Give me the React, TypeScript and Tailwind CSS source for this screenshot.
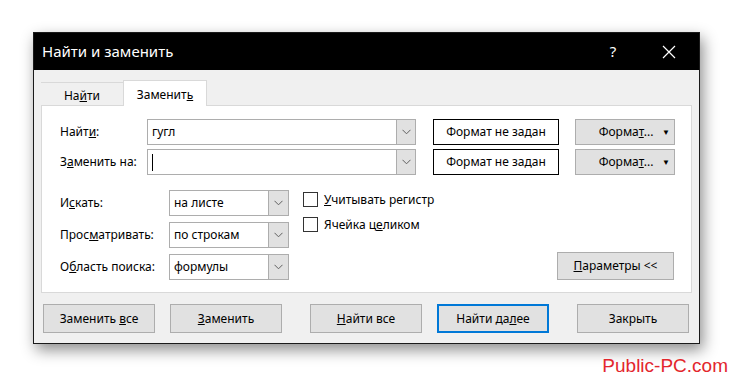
import React from "react";

const font = { fontFamily: '"Noto Sans", "Segoe UI", sans-serif' };

function Chevron() {
  return (
    <svg width="9" height="6" viewBox="0 0 9 6">
      <path d="M0.5 0.8 L4.5 4.8 L8.5 0.8" fill="none" stroke="#606060" strokeWidth="1" />
    </svg>
  );
}

function Combo({ width, value, caret }: { width: number; value?: string; caret?: boolean }) {
  return (
    <div className="flex h-[26px] border border-[#adadad] bg-white" style={{ width }}>
      <div className="flex flex-1 items-center pl-[4px] text-[12px] text-black">
        {caret ? <span className="inline-block h-[17px] w-px bg-black" /> : value}
      </div>
      <div className="flex w-[19px] items-center justify-center border-l border-[#adadad] bg-[#e1e1e1]">
        <Chevron />
      </div>
    </div>
  );
}

function Select({ value }: { value: string }) {
  return (
    <div className="flex h-[26px] w-[120px] border border-[#adadad] bg-white">
      <div className="flex flex-1 items-center pl-[4px] text-[12px] text-black">{value}</div>
      <div className="flex w-[20px] items-center justify-center border-l border-[#adadad] bg-[#e1e1e1]">
        <Chevron />
      </div>
    </div>
  );
}

function FormatRow({ label, combo }: { label: React.ReactNode; combo: React.ReactNode }) {
  return (
    <div className="flex h-[26px] items-center">
      <div className="w-[87px] text-[12px] text-black">{label}</div>
      {combo}
      <div className="ml-[17px] flex h-[26px] w-[126px] items-center justify-center border border-black bg-white text-[12px] text-black">
        Формат не задан
      </div>
      <div className="ml-[16px] flex h-[26px] w-[100px] items-center border border-[#adadad] bg-[#e1e1e1] text-[12px] text-black">
        <span className="flex-1 pl-[14px] text-center">
          Форма<u>т</u>...
        </span>
        <span className="pr-[4px] text-[8px]">▼</span>
      </div>
    </div>
  );
}

function SelRow({ label, value }: { label: React.ReactNode; value: string }) {
  return (
    <div className="flex h-[26px] items-center">
      <div className="w-[109px] text-[12px] text-black">{label}</div>
      <Select value={value} />
    </div>
  );
}

function Check({ label }: { label: React.ReactNode }) {
  return (
    <div className="flex h-[25px] items-center gap-[6px]">
      <div className="h-[15px] w-[15px] border border-[#333333] bg-white" />
      <span className="text-[12px] text-black">{label}</span>
    </div>
  );
}

function Btn({ children, focused }: { children: React.ReactNode; focused?: boolean }) {
  return (
    <div
      className={
        "flex h-[29px] w-[112px] items-center justify-center bg-[#e1e1e1] text-[12px] text-black " +
        (focused ? "border-2 border-[#0078d7]" : "border border-[#adadad]")
      }
    >
      <span>{children}</span>
    </div>
  );
}

export default function App() {
  return (
    <div className="relative h-[377px] w-[733px] overflow-hidden bg-white" style={font}>
      <div className="ml-[33px] mt-[32px] flex h-[312px] w-[667px] flex-col border border-[#1a1a1a] bg-[#f0f0f0] shadow-[3px_6px_14px_rgba(0,0,0,0.45)]">
        {/* Title bar */}
        <div className="flex h-[37px] items-center bg-black text-white">
          <div className="flex-1 pl-[8px] text-[15px]">Найти и заменить</div>
          <div className="w-[20px] text-center text-[15px]">?</div>
          <div className="ml-[36px] mr-[20px] flex w-[20px] items-center justify-center">
            <svg width="14" height="14" viewBox="0 0 14 14">
              <path d="M1 1 L13 13 M13 1 L1 13" stroke="white" strokeWidth="1.2" />
            </svg>
          </div>
        </div>
        {/* Body */}
        <div className="flex flex-1 flex-col px-[7px] pt-[10px]">
          {/* Tabs */}
          <div className="flex h-[25px] items-end">
            <div className="flex h-[23px] w-[82px] items-center justify-center border-t border-[#d9d9d9] pt-[3px] text-[12px] text-black">
              <span>
                На<u>й</u>ти
              </span>
            </div>
            <div className="relative z-10 -mb-px flex h-[26px] w-[84px] items-center justify-center border border-b-0 border-[#d9d9d9] bg-white pt-[3px] text-[12px] text-black">
              <span>
                Заменит<u>ь</u>
              </span>
            </div>
          </div>
          {/* Panel */}
          <div className="flex h-[188px] flex-col border border-[#d9d9d9] bg-white pl-[18px] pt-[13px]">
            <div className="flex flex-col gap-[4px]">
              <FormatRow label={<>Найт<u>и</u>:</>} combo={<Combo width={269} value="гугл" />} />
              <FormatRow label={<>З<u>а</u>менить на:</>} combo={<Combo width={269} caret />} />
            </div>
            <div className="mt-[15px] flex">
              <div className="flex flex-col gap-[6px]">
                <SelRow label={<>И<u>с</u>кать:</>} value="на листе" />
                <SelRow label={<>Прос<u>м</u>атривать:</>} value="по строкам" />
                <SelRow label={<>О<u>б</u>ласть поиска:</>} value="формулы" />
              </div>
              <div className="ml-[14px] -mt-[3px] flex flex-col">
                <Check label={<><u>У</u>читывать регистр</>} />
                <Check label={<>Ячейка ц<u>е</u>ликом</>} />
              </div>
              <div className="ml-auto mr-[17px] flex flex-col justify-end">
                <div className="flex h-[28px] w-[117px] items-center justify-center border border-[#adadad] bg-[#e1e1e1] text-[12px] text-black">
                  <span>
                    <u>П</u>араметры &lt;&lt;
                  </span>
                </div>
              </div>
            </div>
          </div>
          {/* Buttons */}
          <div className="mt-[11px] flex items-center pl-[2px]">
            <Btn>
              {"Заменить "}
              <u>в</u>се
            </Btn>
            <div className="ml-[15px]">
              <Btn>
                <u>З</u>аменить
              </Btn>
            </div>
            <div className="ml-[28px]">
              <Btn>
                <u>Н</u>айти{" все"}
              </Btn>
            </div>
            <div className="ml-[15px]">
              <Btn focused>
                {"Найти да"}
                <u>л</u>ее
              </Btn>
            </div>
            <div className="ml-[28px]">
              <Btn>Закрыть</Btn>
            </div>
          </div>
        </div>
      </div>
      <div className="mt-[12px] flex justify-end pr-[5px]">
        <span className="text-[19px] leading-[20px] text-[#e3262d]" style={{ fontFamily: '"Liberation Sans", Arial, sans-serif' }}>
          Public-PC.com
        </span>
      </div>
    </div>
  );
}
